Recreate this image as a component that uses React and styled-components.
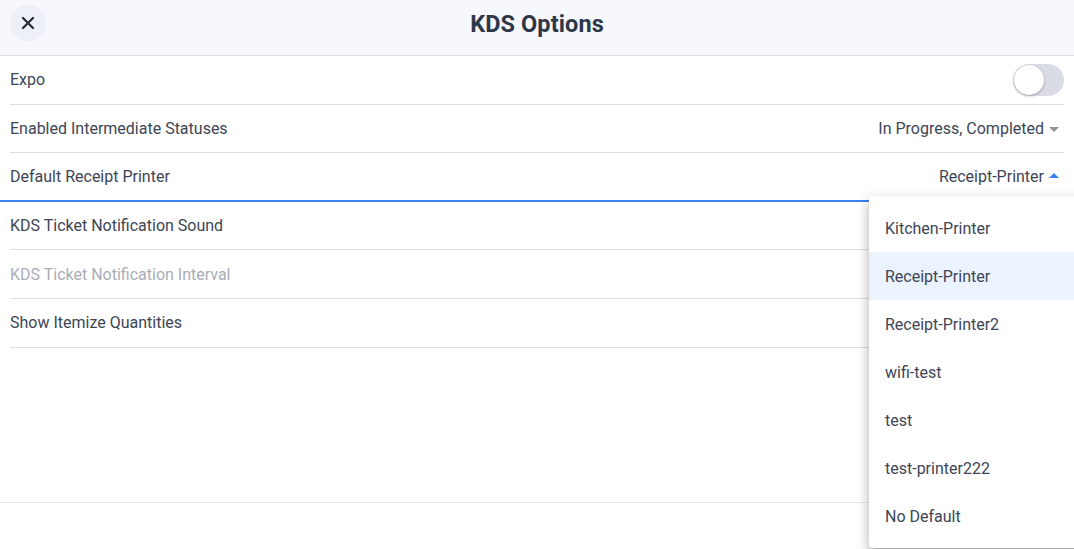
import styled, { createGlobalStyle } from "styled-components";

const GlobalStyle = createGlobalStyle`
  html, body {
    margin: 0;
    padding: 0;
    background: #ffffff;
    overflow: hidden;
  }
  * {
    box-sizing: border-box;
  }
  body {
    font-family: Roboto, "Liberation Sans", Arial, sans-serif;
    color: #3d4555;
  }
`;

const options = [
  "Kitchen-Printer",
  "Receipt-Printer",
  "Receipt-Printer2",
  "wifi-test",
  "test",
  "test-printer222",
  "No Default",
];

export default function App() {
  return (
    <Page>
      <GlobalStyle />
      <Header>
        <CloseButton>
          <svg width="14" height="14" viewBox="0 0 14 14">
            <path
              d="M2 2 L12 12 M12 2 L2 12"
              stroke="#262b36"
              strokeWidth="2.2"
              strokeLinecap="round"
            />
          </svg>
        </CloseButton>
        <Title>KDS Options</Title>
      </Header>
      <List>
        <Row>
          <Label>Expo</Label>
          <Toggle>
            <Knob />
          </Toggle>
        </Row>
        <Row>
          <Label>Enabled Intermediate Statuses</Label>
          <Value>
            In Progress, Completed
            <Caret />
          </Value>
        </Row>
        <Row $active>
          <Label>Default Receipt Printer</Label>
          <Value>
            Receipt-Printer
            <Caret $up />
          </Value>
        </Row>
        <Row>
          <Label>KDS Ticket Notification Sound</Label>
        </Row>
        <Row>
          <Label $disabled>KDS Ticket Notification Interval</Label>
        </Row>
        <Row>
          <Label>Show Itemize Quantities</Label>
        </Row>
      </List>
      <Footer />
      <Menu>
        {options.map((item, index) => (
          <MenuItem key={index} $selected={item === "Receipt-Printer"}>
            {item}
          </MenuItem>
        ))}
      </Menu>
    </Page>
  );
}

const Page = styled.div`
  position: relative;
  width: 1074px;
  height: 549px;
  display: flex;
  flex-direction: column;
`;

const Header = styled.div`
  height: 56px;
  flex-shrink: 0;
  background: #f7f8fd;
  border-bottom: 1px solid #dcdde0;
  display: flex;
  align-items: center;
  justify-content: center;
  position: relative;
  padding-bottom: 8px;
`;

const CloseButton = styled.div`
  position: absolute;
  left: 10px;
  top: 5px;
  width: 36px;
  height: 36px;
  border-radius: 50%;
  background: #eef0f8;
  display: flex;
  align-items: center;
  justify-content: center;
`;

const Title = styled.h1`
  margin: 0;
  font-size: 23.5px;
  font-weight: 700;
  color: #2e3748;
  letter-spacing: 0.1px;
`;

const List = styled.div`
  flex: 1;
  display: flex;
  flex-direction: column;
`;

const Row = styled.div`
  height: 48.6px;
  margin: ${(p) => (p.$active ? "0" : "0 10px")};
  padding: ${(p) => (p.$active ? "0 15px 0 10px" : "0 5px 0 0")};
  display: flex;
  align-items: center;
  justify-content: space-between;
  border-bottom: ${(p) =>
    p.$active ? "2px solid #3a82f4" : "1px solid #dcdde0"};
`;

const Label = styled.span`
  font-size: 16px;
  color: ${(p) => (p.$disabled ? "#a9adb6" : "#3d4555")};
`;

const Value = styled.span`
  font-size: 16px;
  color: #3d4555;
  display: flex;
  align-items: center;
  gap: 5px;
`;

const Caret = styled.span`
  width: 0;
  height: 0;
  border-left: 5px solid transparent;
  border-right: 5px solid transparent;
  ${(p) =>
    p.$up
      ? "border-bottom: 5px solid #3a82f4; margin-bottom: 2px;"
      : "border-top: 5px solid #8f939c; margin-top: 2px;"}
`;

const Toggle = styled.div`
  width: 51px;
  height: 32px;
  border-radius: 16px;
  background: #dadce5;
  margin-right: -5px;
  padding: 1px;
  display: flex;
  align-items: center;
`;

const Knob = styled.div`
  width: 30px;
  height: 30px;
  border-radius: 50%;
  background: #ffffff;
  box-shadow: 0 1px 3px rgba(0, 0, 0, 0.3);
`;

const Footer = styled.div`
  height: 47px;
  flex-shrink: 0;
  border-top: 1px solid #e6e7ea;
`;

const Menu = styled.div`
  position: absolute;
  top: 196px;
  left: 869px;
  width: 215px;
  padding: 8px 0;
  background: #ffffff;
  border-radius: 4px;
  box-shadow: 0 5px 5px -3px rgba(0, 0, 0, 0.2), 0 8px 10px 1px rgba(0, 0, 0, 0.14),
    0 3px 14px 2px rgba(0, 0, 0, 0.12);
`;

const MenuItem = styled.div`
  height: 48px;
  padding: 0 16px;
  display: flex;
  align-items: center;
  font-size: 16px;
  color: #3d4555;
  background: ${(p) => (p.$selected ? "#ebf3fe" : "transparent")};
`;
